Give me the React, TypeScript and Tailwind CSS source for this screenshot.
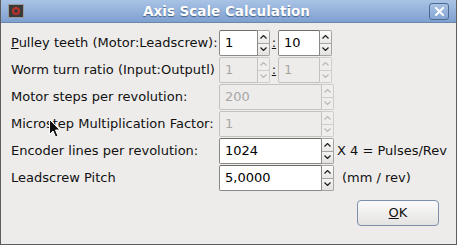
import React from "react"

function Chevron({ up, disabled }: { up: boolean; disabled?: boolean }) {
  const c = disabled ? "#b9b9b9" : "#1e1e1e"
  return (
    <svg width="7" height="4" viewBox="0 0 7 4">
      {up ? (
        <polyline points="0.5,3.5 3.5,0.5 6.5,3.5" fill="none" stroke={c} strokeWidth="1.2" />
      ) : (
        <polyline points="0.5,0.5 3.5,3.5 6.5,0.5" fill="none" stroke={c} strokeWidth="1.2" />
      )}
    </svg>
  )
}

function Spin({ value, width, disabled }: { value: string; width: string; disabled?: boolean }) {
  return (
    <div className={`flex h-[26px] ${width}`}>
      <div
        className={
          disabled
            ? "flex-1 flex items-center pl-[5px] border border-[#c4c2bf] rounded-l-[2px] bg-[#edeceb] text-[#a9a7a4]"
            : "flex-1 flex items-center pl-[5px] border border-[#8b8985] border-t-[#6f6d6a] rounded-l-[2px] bg-white text-[#000]"
        }
      >
        {value}
      </div>
      <div className="w-[12px] flex flex-col">
        <div
          className={`flex-1 flex items-center justify-center border border-l-0 rounded-tr-[2px] ${
            disabled ? "border-[#cfcdca] bg-[#efeeed]" : "border-[#a6a4a0] bg-gradient-to-b from-[#fdfdfd] to-[#e9e8e6]"
          }`}
        >
          <Chevron up disabled={disabled} />
        </div>
        <div
          className={`flex-1 flex items-center justify-center border border-l-0 border-t-0 rounded-br-[2px] ${
            disabled ? "border-[#cfcdca] bg-[#efeeed]" : "border-[#a6a4a0] bg-gradient-to-b from-[#f4f4f3] to-[#e3e2e0]"
          }`}
        >
          <Chevron up={false} disabled={disabled} />
        </div>
      </div>
    </div>
  )
}

export default function App() {
  return (
    <div className="w-[457px] h-[245px] flex flex-col bg-[#edeceb] border border-[#5d5d5d] border-t-0 font-['DejaVu_Sans',sans-serif] text-[13px] text-[#111] relative overflow-hidden">
      {/* title bar */}
      <div className="h-[23px] flex items-center px-[7px] bg-gradient-to-b from-[#a9c3e5] to-[#7fa0d0] border-b border-[#6b86ad]">
        <div className="w-[16px] h-[14px] bg-[#3a3a3a] border border-[#9a9a9a] flex items-center justify-center">
          <div className="w-[8px] h-[8px] rounded-full border-2 border-[#c0302b]" />
        </div>
        <div className="flex-1 text-center text-white font-bold text-[13.5px] [text-shadow:0_1px_1px_#44608a]">
          Axis Scale Calculation
        </div>
        <div className="w-[20px] h-[17px] rounded-[3px] border border-[#4d6a94] bg-gradient-to-b from-[#a9c2e4] to-[#86a6d3] flex items-center justify-center">
          <svg width="9" height="9" viewBox="0 0 9 9">
            <path d="M1 1L8 8M8 1L1 8" stroke="#fff" strokeWidth="2" strokeLinecap="round" />
          </svg>
        </div>
      </div>

      {/* form */}
      <div className="flex flex-col gap-[1px] pt-[7px] pl-[10px]">
        <div className="flex items-center h-[26px]">
          <div className="w-[208px]">
            <span className="underline">P</span>ulley teeth (Motor:Leadscrew):
          </div>
          <Spin value="1" width="w-[51px]" />
          <span className="w-[8px] text-center underline">:</span>
          <Spin value="10" width="w-[54px]" />
        </div>
        <div className="flex items-center h-[26px]">
          <div className="w-[208px]">Worm turn ratio (Input:Outputl)</div>
          <Spin value="1" width="w-[51px]" disabled />
          <span className="w-[8px] text-center underline">:</span>
          <Spin value="1" width="w-[54px]" disabled />
        </div>
        <div className="flex items-center h-[26px]">
          <div className="w-[208px]">Motor steps per revolution:</div>
          <Spin value="200" width="w-[115px]" disabled />
        </div>
        <div className="flex items-center h-[26px]">
          <div className="w-[208px]">Microstep Multiplication Factor:</div>
          <Spin value="1" width="w-[115px]" disabled />
        </div>
        <div className="flex items-center h-[26px]">
          <div className="w-[208px]">Encoder lines per revolution:</div>
          <Spin value="1024" width="w-[115px]" />
          <span className="ml-[3px]">X 4 = Pulses/Rev</span>
        </div>
        <div className="flex items-center h-[26px]">
          <div className="w-[208px]">Leadscrew Pitch</div>
          <Spin value="5,0000" width="w-[115px]" />
          <span className="ml-[8px]">(mm / rev)</span>
        </div>
      </div>

      <div className="flex justify-end pr-[17px] pt-[9px]">
        <button className="w-[82px] h-[26px] rounded-[4px] border border-[#7d8fac] bg-gradient-to-b from-[#fbfbfb] to-[#e4e3e1] text-[13px]">
          <span className="underline">O</span>K
        </button>
      </div>

      {/* mouse pointer */}
      <svg className="absolute left-[48px] top-[119px]" width="12" height="19" viewBox="0 0 12 19">
        <path d="M0.5 0.5L0.5 15.5L4 12L6.5 18L9 17L6.5 11L11 11Z" fill="#111" stroke="#fff" strokeWidth="1" />
      </svg>
    </div>
  )
}
